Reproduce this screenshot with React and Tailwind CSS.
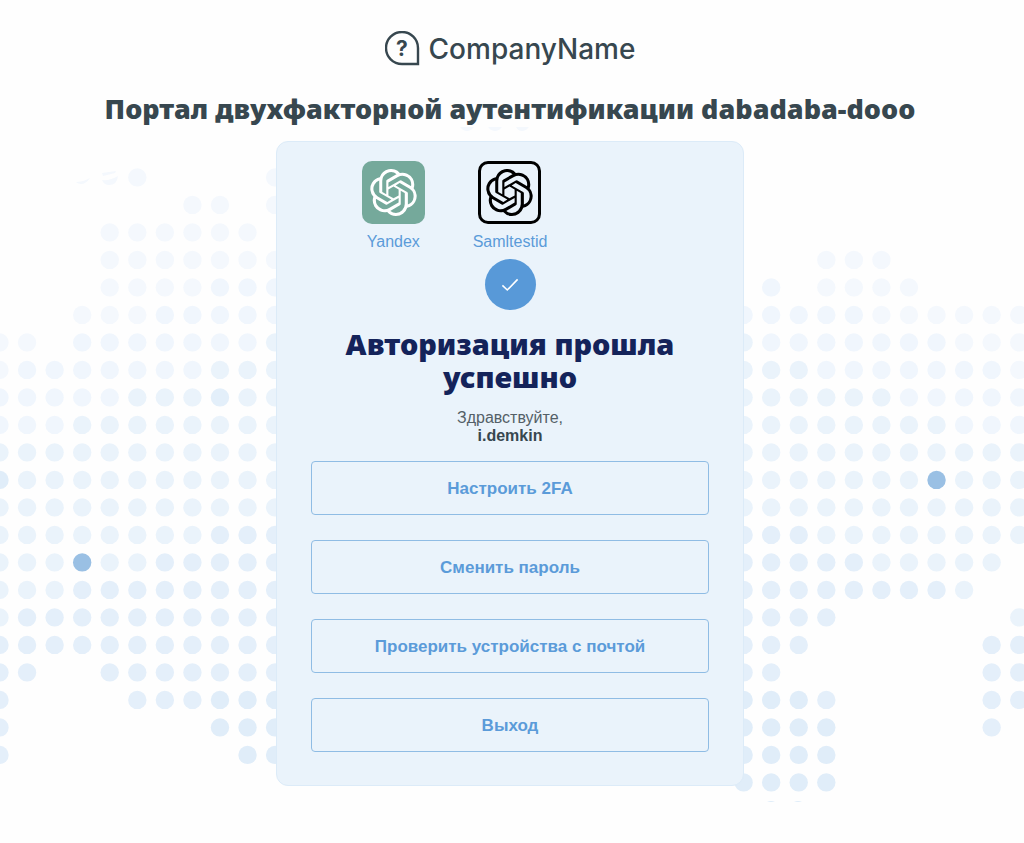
import { SiOpenai } from 'react-icons/si'

const STEP_X = 27.56
const STEP_Y = 27.5
const ORIGIN_X = -0.5
const ORIGIN_Y = 177.4

// [row, [from, to], [from, to], ...]
const mapRows = [
  [0, [5, 5], [10, 10]],
  [1, [7, 8], [10, 10]],
  [2, [4, 9]],
  [3, [4, 10], [30, 32]],
  [4, [4, 10], [28, 28], [30, 33]],
  [5, [3, 10], [27, 37]],
  [6, [0, 1], [3, 10], [27, 37]],
  [7, [0, 10], [27, 37]],
  [8, [0, 10], [27, 37]],
  [9, [0, 10], [27, 37]],
  [10, [0, 10], [27, 37]],
  [11, [0, 10], [27, 37]],
  [12, [0, 10], [27, 37]],
  [13, [0, 10], [27, 37]],
  [14, [0, 10], [27, 36]],
  [15, [0, 10], [27, 35]],
  [16, [0, 10], [27, 30], [37, 37]],
  [17, [0, 10], [27, 29], [36, 37]],
  [18, [0, 1], [4, 10], [27, 28], [36, 37]],
  [19, [0, 0], [5, 10], [27, 30], [36, 37]],
  [20, [0, 0], [8, 10], [27, 30], [36, 36]],
  [21, [0, 0], [9, 10], [27, 30]],
  [22, [27, 30]],
]

const specialDots = {
  '14-3': '#9ac0e4',
  '11-34': '#9ac0e4',
  '8-8': '#e3effa',
  '11-0': '#e0edf9',
}

const getDotColor = (row, col) => {
  const special = specialDots[`${row}-${col}`]
  if (special) return special
  const depth = row - Math.abs(col - 18.5) * 0.4
  if (depth < -0.3) return '#f4f8fd'
  if (depth < 2.5) return '#f0f6fd'
  if (depth < 8.7) return '#eaf3fb'
  if (depth < 14.7) return '#e4effa'
  return '#e0edf9'
}

const dots = mapRows.flatMap(([row, ...ranges]) =>
  ranges.flatMap(([from, to]) =>
    Array.from({ length: to - from + 1 }, (_, i) => ({ row, col: from + i }))
  )
)

const actions = ['Настроить 2FA', 'Сменить пароль', 'Проверить устройства с почтой', 'Выход']

function WorldMap() {
  return (
    <svg aria-hidden="true" viewBox="0 0 1024 843" preserveAspectRatio="xMidYMin slice" className="absolute inset-0 w-full h-full">
      {dots.map(({ row, col }) => (
        <circle key={`${row}-${col}`} cx={ORIGIN_X + col * STEP_X} cy={ORIGIN_Y + row * STEP_Y} r="9.2" fill={getDotColor(row, col)} />
      ))}
      {/* faded edges of the map */}
      <g fill="#f4f8fd">
        <path d="M460 127h14q-3 4-7 4t-7-4zM488 127h14q-3 4-7 4t-7-4zM516 127h13q-3 4-7 4t-6-4z" />
        <path d="M76 182q7 0 14-4-4 6-9 6-3 0-5-2zM102 180q8 1 16-4-1 9-9 9-5 0-7-5zM102 173l14-2-1 2-12 3z" />
      </g>
      <path d="M767 802q4-2 8 0zM794 802q4-2 8 0z" fill="#e0edf9" />
    </svg>
  )
}

function Logo() {
  return (
    <div className="flex items-center gap-2 text-[#37474f]">
      <svg viewBox="0 0 36 36" className="w-9 h-9" fill="none">
        <path d="M33 33H17A16 16 0 1 1 33 17Z" stroke="currentColor" strokeWidth="2.4" />
        <text x="17" y="24.6" textAnchor="middle" fontSize="21" fontWeight="700" fontFamily="Inter, sans-serif" fill="currentColor">?</text>
      </svg>
      <span className="font-['Inter',sans-serif] text-[28px] leading-9 font-medium">CompanyName</span>
    </div>
  )
}

export default function App() {
  return (
    <div className="relative min-h-screen bg-[#fefefe] font-['Liberation_Sans',Arial,sans-serif] overflow-hidden">
      <WorldMap />

      <div className="relative flex flex-col items-center pt-[31px] pr-1 pb-14">
        <Logo />
        <h1 className="mt-[22px] text-center font-['Noto_Sans',sans-serif] font-black text-[27px] leading-10 text-[#37474f]">
          Портал двухфакторной аутентификации dabadaba-dooo
        </h1>

        <main className="mt-3 w-full max-w-[468px] rounded-xl border border-[#dcebf8] bg-[#eaf3fb] px-[34px] pt-[19px] pb-[33px] flex flex-col items-center">
          <div className="grid grid-cols-3 w-full px-6 text-base leading-5 text-[#5b9bd9]">
            <a href="#yandex" className="flex flex-col items-center gap-2">
              <span className="flex items-center justify-center w-[63px] h-[63px] rounded-[10px] bg-[#75a99b] text-white">
                <SiOpenai className="w-[47px] h-[47px]" />
              </span>
              Yandex
            </a>
            <a href="#samltestid" className="flex flex-col items-center gap-2">
              <span className="flex items-center justify-center w-[63px] h-[63px] rounded-[10px] border-3 border-black text-black">
                <SiOpenai className="w-[47px] h-[47px]" />
              </span>
              Samltestid
            </a>
          </div>

          <div className="mt-[7px] flex items-center justify-center w-[51px] h-[51px] rounded-full bg-[#5899d8]">
            <svg viewBox="0 0 18 14" className="w-[18px] h-[14px]" fill="none" stroke="white" strokeWidth="1.6">
              <path d="M1.4 7.4 6.3 12 16.6 1.4" />
            </svg>
          </div>

          <h2 className="mt-[17px] w-full text-center font-['Noto_Sans',sans-serif] font-black text-[29px] leading-[33px] text-[#14235a]">
            Авторизация прошла успешно
          </h2>
          <p className="mt-4 text-center text-base leading-[18px] text-[#546067]">
            Здравствуйте,
            <br />
            <b className="text-[#37474f]">i.demkin</b>
          </p>

          <div className="mt-4 w-full flex flex-col gap-[25px]">
            {actions.map(label => (
              <button key={label} type="button" className="w-full h-[54px] pt-0.5 rounded border border-[#8fbce4] text-[17px] font-bold text-[#5b9bd9] cursor-pointer">
                {label}
              </button>
            ))}
          </div>
        </main>
      </div>
    </div>
  )
}
